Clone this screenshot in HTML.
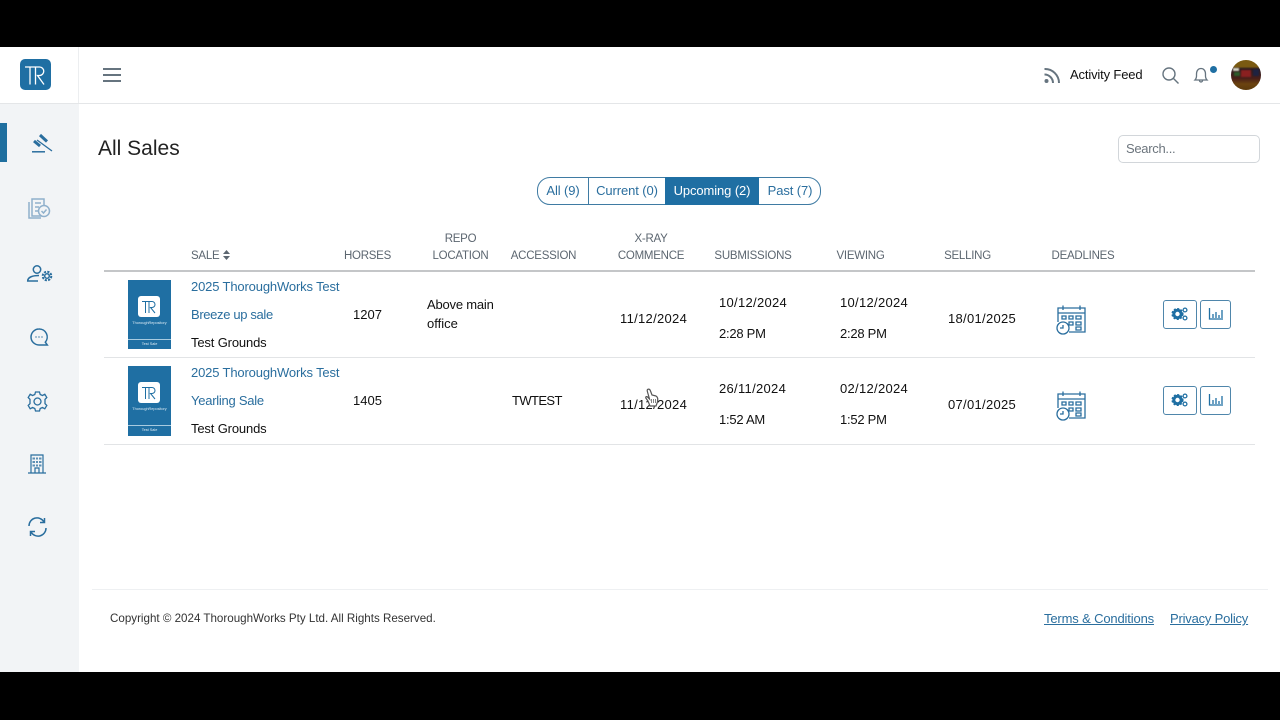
<!DOCTYPE html>
<html><head><meta charset="utf-8"><style>
*{box-sizing:border-box}
html,body{margin:0;padding:0;width:1280px;height:720px;overflow:hidden;background:#000;font-family:"Liberation Sans",sans-serif}
#a{position:absolute;left:0;top:47px;width:1280px;height:625px;background:#fff}
.t{position:absolute;white-space:nowrap;font-size:13px;line-height:16px;color:#111;margin-top:1px}
.c{transform:translateX(-50%);text-align:center}
.l{color:#2a6e9e}
.h{color:#5c6670;font-size:11.5px;letter-spacing:-.25px;margin-top:1px}
.d{letter-spacing:.3px}
.m{letter-spacing:-.25px}
.g{letter-spacing:-.15px}
.tb{letter-spacing:-.1px}
.x{position:absolute;white-space:nowrap;font-size:3.8px;line-height:5px;color:#dcebf4;transform:translateX(-50%)}
.r{position:absolute}
.av div{filter:blur(.8px)}
svg{position:absolute;overflow:visible}
</style></head><body>
<div id="a"></div>
<div class="r" style="left:0;top:103px;width:79px;height:569px;background:#f2f4f6"></div>
<div class="r" style="left:0;top:103px;width:1280px;height:1px;background:#e4e6e8"></div>
<div class="r" style="left:78px;top:47px;width:1px;height:56px;background:#eceef0"></div>
<div class="r" style="left:0;top:123px;width:7px;height:39px;background:#1f6f9f"></div>

<div class="r" style="left:20px;top:59px;width:31px;height:31px;border-radius:5px;background:#1f6fa3"></div>
<svg style="left:20px;top:59px" width="31" height="31" fill="none" stroke="#fff" stroke-width="1.300"><path d="M5 8H19.500a4.200 4.200 0 0 1 0 8.500H17.500L24 25.500M10 8V25.500M15.500 8V25.500"/></svg>

<svg style="left:103px;top:68px" width="18" height="14" stroke="#66747f" stroke-width="2"><path d="M0 1H18M0 7H18M0 13H18"/></svg>

<!-- sidebar icons -->
<svg style="left:30px;top:132px" width="24" height="22" fill="none" stroke="#2a6e9e"><path stroke-width="3" d="M10 3L17 9.500M4 9L10 14"/><path stroke-width="1.300" d="M7 8L22 19"/><path stroke-width="1.500" d="M2 19.800H15"/></svg>
<svg style="left:28px;top:197px" width="24" height="22" fill="none" stroke="#8fb0cc" stroke-width="1.500"><path d="M4 2H16V19H4ZM1 5V21H13M7 6H13M7 10H11M7 14H10"/><circle cx="16" cy="14" r="5.500" fill="#f2f4f6"/><path d="M13.500 14L15.500 16L18.500 12.500"/></svg>
<svg style="left:27px;top:262px" width="26" height="22" fill="none" stroke="#2a6e9e" stroke-width="1.500"><circle cx="10" cy="7.500" r="3.700"/><path d="M12 13.500C6 13.500 0.700 15 0.700 19H11"/><circle cx="20" cy="14" r="2.300"/><circle cx="20" cy="14" r="4.300" stroke-width="2" stroke-dasharray="2.200 1.200"/></svg>
<svg style="left:30px;top:328px" width="18" height="19" fill="none" stroke="#2a6e9e" stroke-width="1.500"><path d="M9 1A8 8 0 1 0 9 17H17.300L15.300 14.200A8 8 0 0 0 9 1Z"/><path d="M5.500 9H6.500M8.500 9H9.500M11.500 9H12.500"/></svg>
<svg style="left:27px;top:391px" width="21" height="21" fill="none" stroke="#2a6e9e" stroke-width="1.300"><circle cx="10.500" cy="10.500" r="3.500"/><path d="M8.500 1H12.500L13.200 3.500L15.500 4.500L17.800 3.200L19.800 6.500L18 8.400V12.600L19.800 14.500L17.800 17.800L15.500 16.500L13.200 17.500L12.500 20H8.500L7.800 17.500L5.500 16.500L3.200 17.800L1.200 14.500L3 12.600V8.400L1.200 6.500L3.200 3.200L5.500 4.500L7.800 3.500Z"/></svg>
<svg style="left:28px;top:454px" width="18" height="20" fill="none" stroke="#2a6e9e" stroke-width="1.200"><path d="M3 19V1H15V19M0 19H18M7 19V14H11V19"/><path stroke-width="2" d="M4.500 4.500H7M8 4.500H10M11 4.500H13.500M4.500 8H7M8 8H10M11 8H13.500M4.500 11.500H7M8 11.500H10M11 11.500H13.500" opacity=".75"/></svg>
<svg style="left:28px;top:517px" width="19" height="20" fill="none" stroke="#2a6e9e" stroke-width="1.500"><path d="M1 9A8 8 0 0 1 16 5M18 11A8 8 0 0 1 3 15M16.500 1V5.500H12M2.500 19V14.500H7"/></svg>

<!-- header right -->
<svg style="left:1044px;top:67px" width="17" height="17" fill="none" stroke="#66747f" stroke-width="2"><circle cx="2.500" cy="14" r="2" fill="#66747f" stroke="none"/><path d="M0.500 7.500A8.500 8.500 0 0 1 9 16M0.500 2A14 14 0 0 1 15 16"/></svg>
<div class="t g" style="left:1070px;top:66px;color:#111">Activity Feed</div>
<svg style="left:1162px;top:67px" width="17" height="17" fill="none" stroke="#66747f" stroke-width="1.400"><circle cx="7" cy="7" r="6"/><path d="M11.500 11.500L16.500 16.500"/></svg>
<svg style="left:1194px;top:67px" width="15" height="16" fill="none" stroke="#66747f" stroke-width="1.300"><path d="M1 13C3 11 2.500 9 2.500 7C2.500 3.500 4.500 1.500 7 1.500S11.500 3.500 11.500 7C11.500 9 11 11 13 13ZM5.500 13.500A1.500 1.500 0 0 0 8.500 13.500"/></svg>
<div class="r" style="left:1210px;top:66px;width:7px;height:7px;border-radius:50%;background:#1f6fa3"></div>
<div class="r av" style="left:1231px;top:60px;width:30px;height:30px;border-radius:50%;overflow:hidden;background:linear-gradient(#7a5a12 0,#7a5a12 22%,#2b1a20 30%,#4a2018 62%,#6b4310 80%,#5c3a0c 100%)">
<div class="r" style="left:2px;top:8px;width:6px;height:3px;background:#d8d8c8"></div>
<div class="r" style="left:3px;top:12px;width:6px;height:4px;background:#2c5a2a"></div>
<div class="r" style="left:10px;top:10px;width:10px;height:7px;background:#8a2020"></div>
<div class="r" style="left:22px;top:9px;width:6px;height:7px;background:#1e2240"></div>
</div>

<div class="t" style="left:98px;top:135px;font-size:21px;line-height:26px;color:#222">All Sales</div>
<div class="r" style="left:1118px;top:135px;width:142px;height:28px;border:1px solid #d2d6da;border-radius:5px"></div>
<div class="t" style="left:1126px;top:140px;color:#6c757d;letter-spacing:-.3px">Search...</div>

<!-- tabs -->
<div class="r" style="left:537px;top:177px;width:284px;height:28px;border:1px solid #3f7ba3;border-radius:13px"></div>
<div class="r" style="left:588px;top:177px;width:1px;height:28px;background:#3f7ba3"></div>
<div class="r" style="left:665px;top:177px;width:94px;height:28px;background:#1f6fa3"></div>
<div class="t l c tb" style="left:563px;top:182px">All (9)</div>
<div class="t l c tb" style="left:627px;top:182px">Current (0)</div>
<div class="t c tb" style="left:712px;top:182px;color:#fff">Upcoming (2)</div>
<div class="t l c tb" style="left:790px;top:182px">Past (7)</div>

<!-- header row -->
<div class="t h" style="left:191px;top:247px">SALE</div>
<svg style="left:223px;top:250px" width="7" height="10" fill="#5c6670"><path d="M3.500 0L7 4H0ZM0 6H7L3.500 10Z"/></svg>
<div class="t h c" style="left:367.500px;top:247px">HORSES</div>
<div class="t h c" style="left:460.500px;top:230px">REPO</div>
<div class="t h c" style="left:460.500px;top:247px">LOCATION</div>
<div class="t h c" style="left:543.500px;top:247px">ACCESSION</div>
<div class="t h c" style="left:651px;top:230px">X-RAY</div>
<div class="t h c" style="left:651px;top:247px">COMMENCE</div>
<div class="t h c" style="left:753px;top:247px">SUBMISSIONS</div>
<div class="t h c" style="left:860.500px;top:247px">VIEWING</div>
<div class="t h c" style="left:967.500px;top:247px">SELLING</div>
<div class="t h c" style="left:1083px;top:247px">DEADLINES</div>
<div class="r" style="left:104px;top:270px;width:1151px;height:2px;background:#c4c6c8"></div>
<div class="r" style="left:104px;top:357px;width:1151px;height:1px;background:#e2e4e6"></div>
<div class="r" style="left:104px;top:444px;width:1151px;height:1px;background:#e2e4e6"></div>

<!-- row 1 -->
<div class="r" style="left:128px;top:280px;width:43px;height:69px;background:#1f6fa3"></div>
<div class="r" style="left:128px;top:339px;width:43px;height:1px;background:#a8cbe0"></div>
<div class="r" style="left:138px;top:296px;width:22px;height:21px;border-radius:3px;background:#fff"></div>
<svg style="left:138px;top:296px" width="22" height="21" fill="none" stroke="#1f6fa3" stroke-width="1"><path d="M4 5.500H14a3 3 0 0 1 0 6H12.500L17 17M7.500 5.500V17M11 5.500V17"/></svg>
<div class="x" style="left:149.500px;top:321px">ThoroughRepository</div>
<div class="x" style="left:149.500px;top:342px">Test Sale</div>
<div class="t l g" style="left:191px;top:278px">2025 ThoroughWorks Test</div>
<div class="t l" style="left:191px;top:306px;letter-spacing:-.35px">Breeze up sale</div>
<div class="t g" style="left:191px;top:334px">Test Grounds</div>
<div class="t" style="left:353px;top:306px">1207</div>
<div class="t" style="left:427px;top:296px;letter-spacing:-.2px">Above main</div>
<div class="t" style="left:427px;top:315px">office</div>
<div class="t d" style="left:620px;top:310px">11/12/2024</div>
<div class="t d" style="left:719px;top:294px">10/12/2024</div>
<div class="t m" style="left:719px;top:325px">2:28 PM</div>
<div class="t d" style="left:840px;top:294px">10/12/2024</div>
<div class="t m" style="left:840px;top:325px">2:28 PM</div>
<div class="t d" style="left:948px;top:310px">18/01/2025</div>
<svg style="left:1056px;top:305px" width="31" height="30" fill="none" stroke="#2a6e9e" stroke-width="1.300"><path d="M2 17V3H29V27H13M2 8H29M7 0.500V5M24 0.500V5M6 11H10V14H6ZM13 11H17V14H13ZM20 11H25V14H20ZM13 17H17V20H13ZM20 17H25V20H20ZM20 22H25V25H20Z"/><circle cx="7" cy="23" r="6"/><path d="M7 20V23H4"/></svg>
<div class="r" style="left:1163px;top:300px;width:34px;height:29px;border:1.500px solid #4f86ab;border-radius:3px"></div>
<svg style="left:1172px;top:307px" width="16" height="14"><circle cx="5.500" cy="7" r="3.700" fill="none" stroke="#1f6fa3" stroke-width="3"/><circle cx="5.500" cy="7" r="5.300" fill="none" stroke="#1f6fa3" stroke-width="1.500" stroke-dasharray="2 1.500"/><circle cx="13" cy="3" r="1.900" fill="none" stroke="#1f6fa3" stroke-width="1.300"/><circle cx="13" cy="11" r="1.900" fill="none" stroke="#1f6fa3" stroke-width="1.300"/></svg>
<div class="r" style="left:1200px;top:300px;width:31px;height:29px;border:1.500px solid #4f86ab;border-radius:3px"></div>
<svg style="left:1209px;top:308px" width="14" height="13" fill="none" stroke="#1f6fa3" stroke-width="1.300"><path d="M0.500 0V11H14M4 10V6M7 10V4M10 10V7M13 10V2"/></svg>

<!-- row 2 -->
<div class="r" style="left:128px;top:366px;width:43px;height:70px;background:#1f6fa3"></div>
<div class="r" style="left:128px;top:425px;width:43px;height:1px;background:#a8cbe0"></div>
<div class="r" style="left:138px;top:382px;width:22px;height:21px;border-radius:3px;background:#fff"></div>
<svg style="left:138px;top:382px" width="22" height="21" fill="none" stroke="#1f6fa3" stroke-width="1"><path d="M4 5.500H14a3 3 0 0 1 0 6H12.500L17 17M7.500 5.500V17M11 5.500V17"/></svg>
<div class="x" style="left:149.500px;top:407px">ThoroughRepository</div>
<div class="x" style="left:149.500px;top:428px">Test Sale</div>
<div class="t l g" style="left:191px;top:364px">2025 ThoroughWorks Test</div>
<div class="t l m" style="left:191px;top:392px">Yearling Sale</div>
<div class="t g" style="left:191px;top:420px">Test Grounds</div>
<div class="t" style="left:353px;top:392px">1405</div>
<div class="t" style="left:512px;top:392px;letter-spacing:-.6px">TWTEST</div>
<div class="t d" style="left:620px;top:396px">11/12/2024</div>
<div class="t d" style="left:719px;top:380px">26/11/2024</div>
<div class="t m" style="left:719px;top:411px">1:52 AM</div>
<div class="t d" style="left:840px;top:380px">02/12/2024</div>
<div class="t m" style="left:840px;top:411px">1:52 PM</div>
<div class="t d" style="left:948px;top:396px">07/01/2025</div>
<svg style="left:1056px;top:391px" width="31" height="30" fill="none" stroke="#2a6e9e" stroke-width="1.300"><path d="M2 17V3H29V27H13M2 8H29M7 0.500V5M24 0.500V5M6 11H10V14H6ZM13 11H17V14H13ZM20 11H25V14H20ZM13 17H17V20H13ZM20 17H25V20H20ZM20 22H25V25H20Z"/><circle cx="7" cy="23" r="6"/><path d="M7 20V23H4"/></svg>
<div class="r" style="left:1163px;top:386px;width:34px;height:29px;border:1.500px solid #4f86ab;border-radius:3px"></div>
<svg style="left:1172px;top:393px" width="16" height="14"><circle cx="5.500" cy="7" r="3.700" fill="none" stroke="#1f6fa3" stroke-width="3"/><circle cx="5.500" cy="7" r="5.300" fill="none" stroke="#1f6fa3" stroke-width="1.500" stroke-dasharray="2 1.500"/><circle cx="13" cy="3" r="1.900" fill="none" stroke="#1f6fa3" stroke-width="1.300"/><circle cx="13" cy="11" r="1.900" fill="none" stroke="#1f6fa3" stroke-width="1.300"/></svg>
<div class="r" style="left:1200px;top:386px;width:31px;height:29px;border:1.500px solid #4f86ab;border-radius:3px"></div>
<svg style="left:1209px;top:394px" width="14" height="13" fill="none" stroke="#1f6fa3" stroke-width="1.300"><path d="M0.500 0V11H14M4 10V6M7 10V4M10 10V7M13 10V2"/></svg>

<!-- cursor -->
<svg style="left:645px;top:388px" width="14" height="19"><path d="M2.500 1.500C4 0.500 5 1.500 5.500 3L7 7L11 8C13 9 13 11 12.500 14L11 18H5L3 13L0.800 10C0.500 8.500 2 8 3 9.500L4.500 11L2.500 4C2.200 3 2 2 2.500 1.500Z" fill="#fff" stroke="#555" stroke-width="1.200"/><path d="M6.500 11V15M8.500 11V15M10.500 11V15" stroke="#666" stroke-width=".8"/></svg>

<!-- footer -->
<div class="r" style="left:92px;top:589px;width:1176px;height:1px;background:#eef0f2"></div>
<div class="t" style="left:110px;top:610px;font-size:11.6px;color:#333">Copyright © 2024 ThoroughWorks Pty Ltd. All Rights Reserved.</div>
<div class="t l g" style="left:1044px;top:610px;text-decoration:underline">Terms &amp; Conditions</div>
<div class="t l" style="left:1170px;top:610px;letter-spacing:-.2px;text-decoration:underline">Privacy Policy</div>
</body></html>
